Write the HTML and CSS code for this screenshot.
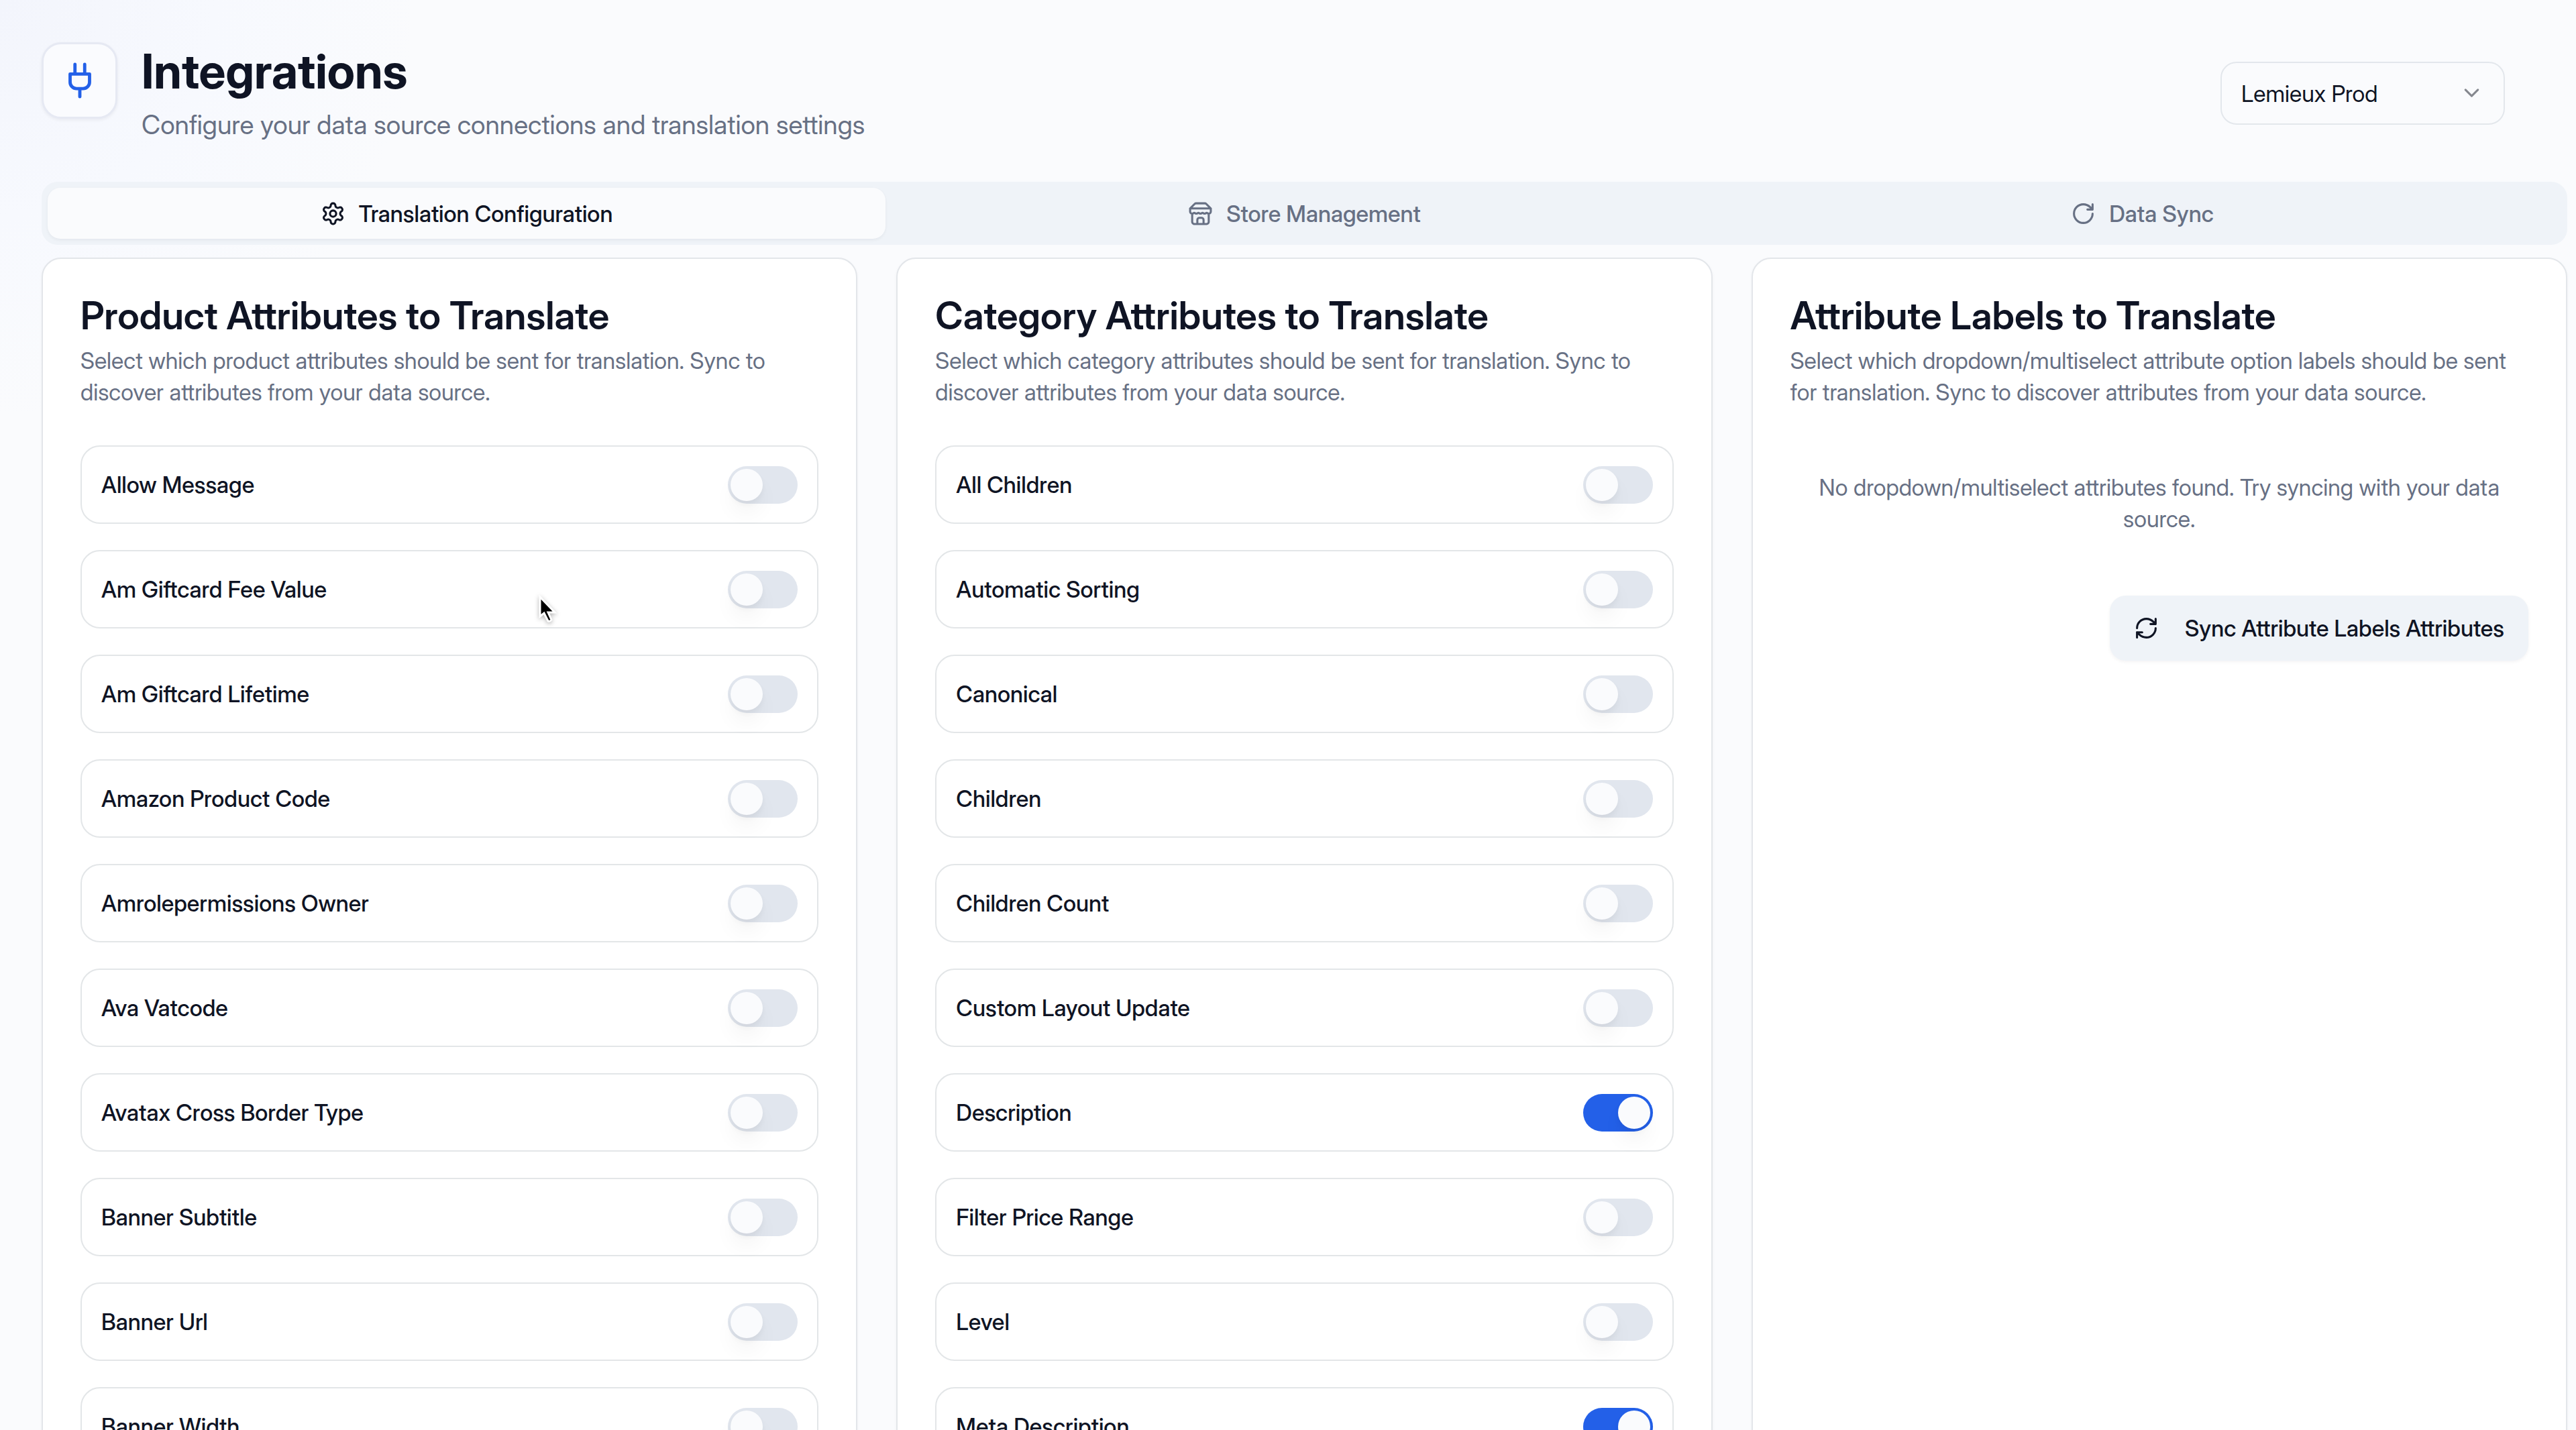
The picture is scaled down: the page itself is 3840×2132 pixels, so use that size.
FILE: index.html
```html
<!DOCTYPE html>
<html lang="en">
<head>
    <meta charset="UTF-8">
    <meta name="viewport" content="width=device-width, initial-scale=1.0">
    <title>Integrations</title>
    <link rel="stylesheet" href="styles.css">
</head>
<body>
    <div class="page">
        <header class="header">
            <div class="logo">
                <svg class="icon_lg" viewBox="0 0 24 24"><path d="M12 22v-5M9 8V2M15 8V2M18 8v5a4 4 0 0 1-4 4h-4a4 4 0 0 1-4-4V8Z"/></svg>
            </div>
            <div class="heading">
                <h1>Integrations</h1>
                <p>Configure your data source connections and translation settings</p>
            </div>
            <div class="store">
                <select class="store_select" aria-label="Store">
                    <option>Lemieux Prod</option>
                </select>
                <svg class="icon store_arrow" viewBox="0 0 24 24"><path d="m6 9 6 6 6-6"/></svg>
            </div>
        </header>

        <nav class="tab_lst">
            <button type="button" class="tab is_on">
                <svg class="icon" viewBox="0 0 24 24"><path d="M12.22 2h-.44a2 2 0 0 0-2 2v.18a2 2 0 0 1-1 1.73l-.43.25a2 2 0 0 1-2 0l-.15-.08a2 2 0 0 0-2.73.73l-.22.38a2 2 0 0 0 .73 2.73l.15.1a2 2 0 0 1 1 1.72v.51a2 2 0 0 1-1 1.74l-.15.09a2 2 0 0 0-.73 2.73l.22.38a2 2 0 0 0 2.73.73l.15-.08a2 2 0 0 1 2 0l.43.25a2 2 0 0 1 1 1.73V20a2 2 0 0 0 2 2h.44a2 2 0 0 0 2-2v-.18a2 2 0 0 1 1-1.73l.43-.25a2 2 0 0 1 2 0l.15.08a2 2 0 0 0 2.73-.73l.22-.39a2 2 0 0 0-.73-2.73l-.15-.08a2 2 0 0 1-1-1.74v-.5a2 2 0 0 1 1-1.74l.15-.09a2 2 0 0 0 .73-2.73l-.22-.38a2 2 0 0 0-2.73-.73l-.15.08a2 2 0 0 1-2 0l-.43-.25a2 2 0 0 1-1-1.73V4a2 2 0 0 0-2-2z"/><circle cx="12" cy="12" r="3"/></svg>
                Translation Configuration
            </button>
            <button type="button" class="tab">
                <svg class="icon" viewBox="0 0 24 24"><path d="m2 7 4.41-4.41A2 2 0 0 1 7.83 2h8.34a2 2 0 0 1 1.42.59L22 7M4 12v8a2 2 0 0 0 2 2h12a2 2 0 0 0 2-2v-8M15 22v-4a2 2 0 0 0-2-2h-2a2 2 0 0 0-2 2v4M2 7h20M22 7v3a2 2 0 0 1-2 2a2.7 2.7 0 0 1-1.59-.63.7.7 0 0 0-.82 0A2.7 2.7 0 0 1 16 12a2.7 2.7 0 0 1-1.59-.63.7.7 0 0 0-.82 0A2.7 2.7 0 0 1 12 12a2.7 2.7 0 0 1-1.59-.63.7.7 0 0 0-.82 0A2.7 2.7 0 0 1 8 12a2.7 2.7 0 0 1-1.59-.63.7.7 0 0 0-.82 0A2.7 2.7 0 0 1 4 12a2 2 0 0 1-2-2V7"/></svg>
                Store Management
            </button>
            <button type="button" class="tab">
                <svg class="icon" viewBox="0 0 24 24"><path d="M21 12a9 9 0 1 1-9-9c2.52 0 4.93 1 6.74 2.74L21 8M21 3v5h-5"/></svg>
                Data Sync
            </button>
        </nav>

        <main class="cards">
            <section class="card">
                <h2>Product Attributes to Translate</h2>
                <p class="desc">Select which product attributes should be sent for translation. Sync to discover attributes from your data source.</p>
                <div class="attr_lst">
                    <label class="attr">Allow Message<input type="checkbox" class="switch"></label>
                    <label class="attr">Am Giftcard Fee Value<input type="checkbox" class="switch"></label>
                    <label class="attr">Am Giftcard Lifetime<input type="checkbox" class="switch"></label>
                    <label class="attr">Amazon Product Code<input type="checkbox" class="switch"></label>
                    <label class="attr">Amrolepermissions Owner<input type="checkbox" class="switch"></label>
                    <label class="attr">Ava Vatcode<input type="checkbox" class="switch"></label>
                    <label class="attr">Avatax Cross Border Type<input type="checkbox" class="switch"></label>
                    <label class="attr">Banner Subtitle<input type="checkbox" class="switch"></label>
                    <label class="attr">Banner Url<input type="checkbox" class="switch"></label>
                    <label class="attr">Banner Width<input type="checkbox" class="switch"></label>
                </div>
            </section>

            <section class="card">
                <h2>Category Attributes to Translate</h2>
                <p class="desc">Select which category attributes should be sent for translation. Sync to discover attributes from your data source.</p>
                <div class="attr_lst">
                    <label class="attr">All Children<input type="checkbox" class="switch"></label>
                    <label class="attr">Automatic Sorting<input type="checkbox" class="switch"></label>
                    <label class="attr">Canonical<input type="checkbox" class="switch"></label>
                    <label class="attr">Children<input type="checkbox" class="switch"></label>
                    <label class="attr">Children Count<input type="checkbox" class="switch"></label>
                    <label class="attr">Custom Layout Update<input type="checkbox" class="switch"></label>
                    <label class="attr">Description<input type="checkbox" class="switch" checked></label>
                    <label class="attr">Filter Price Range<input type="checkbox" class="switch"></label>
                    <label class="attr">Level<input type="checkbox" class="switch"></label>
                    <label class="attr">Meta Description<input type="checkbox" class="switch" checked></label>
                </div>
            </section>

            <section class="card">
                <h2>Attribute Labels to Translate</h2>
                <p class="desc">Select which dropdown/multiselect attribute option labels should be sent for translation. Sync to discover attributes from your data source.</p>
                <p class="empty">No dropdown/multiselect attributes found. Try syncing with your data source.</p>
                <button type="button" class="sync_btn">
                    <svg class="icon" viewBox="0 0 24 24"><path d="M3 12a9 9 0 0 1 9-9 9.75 9.75 0 0 1 6.74 2.74L21 8M21 3v5h-5M21 12a9 9 0 0 1-9 9 9.75 9.75 0 0 1-6.74-2.74L3 16M8 16H3v5"/></svg>
                    Sync Attribute Labels Attributes
                </button>
            </section>
        </main>

        <svg class="cursor" viewBox="0 0 32 48"><path d="M5 4v29l6-5 6 12q3 1 5-2l-5-11h10z"/></svg>
    </div>
</body>
</html>
```
FILE: styles.css
```css
/* reset */
*{box-sizing: border-box;}
body,h1,h2,p{margin: 0; padding: 0;}
button,select{font: inherit; color: inherit; border: 0; cursor: pointer;}

body{
    font-family: "Inter Display", Inter, "Liberation Sans", sans-serif;
    font-variation-settings: "opsz" 32;
    font-size: 34px; line-height: 47px;
    color: #0f1424;
    background-color: #fafbfd;
}

/* layout */
.page{
    position: relative;
    height: 100vh; overflow: hidden;
    padding: 63px 13px 0 62px;
    background: radial-gradient(circle at 0 0, #f3f5fc 0, #f7f9fe 320px, #fafbfd 620px);
}

.icon,
.icon_lg{
    width: 37px; height: 37px; flex: none;
    fill: none; stroke: currentColor; stroke-width: 2;
    stroke-linecap: round; stroke-linejoin: round;
}
.icon_lg{width: 58px; height: 58px;}

/* header */
.header{display: flex; align-items: flex-start; padding-right: 93px;}
.logo{
    display: flex; align-items: center; justify-content: center;
    width: 113px; height: 114px; margin-right: 36px;
    border: 3px solid #e6e9f3; border-radius: 29px;
    background-color: #fafbfe;
    color: #2360e8;
    box-shadow: 0 2px 5px rgba(15, 20, 40, 0.06);
}
.heading{flex: 1;}
.heading h1{font-size: 71px; line-height: 86px; font-weight: 700;}
.heading p{font-size: 39px; line-height: 58px; margin-top: 8px; color: #677084;}

.store{position: relative; margin-top: 29px;}
.store_select{
    appearance: none;
    width: 424px; height: 94px; padding: 0 29px;
    border: 2px solid #e3e7ec; border-radius: 24px;
    background-color: #fafbfd;
}
.store_arrow{
    position: absolute; right: 31px; top: 28px;
    color: #85888f; pointer-events: none;
}

/* tabs */
.tab_lst{
    display: grid; grid-template-columns: repeat(3, 1fr);
    margin-top: 56px; padding: 9px;
    border-radius: 24px;
    background-color: #eff3f8;
}
.tab{
    display: flex; align-items: center; justify-content: center; gap: 20px;
    height: 76px; border-radius: 19px;
    background: none;
    font-weight: 500; color: #677084;
}
.tab.is_on{
    background-color: #fafbfd; color: #0f1424;
    box-shadow: 0 2px 5px rgba(15, 20, 40, 0.05);
}

/* cards */
.cards{
    display: grid; grid-template-columns: repeat(3, 1fr); gap: 58px;
    margin-top: 19px;
}
.card{
    padding: 56px;
    border: 2px solid #e3e6ea; border-radius: 29px;
    background-color: #fff;
    box-shadow: 0 2px 5px rgba(15, 20, 40, 0.04);
}
.card h2{font-size: 57px; line-height: 58px; font-weight: 600;}
.card .desc{margin-top: 14px; color: #677084;}

.attr_lst{display: grid; gap: 39px; margin-top: 56px;}
.attr{
    display: flex; align-items: center; justify-content: space-between;
    height: 117px; padding: 0 29px;
    border: 2px solid #e3e6e8; border-radius: 29px;
    font-weight: 500;
}

/* switch */
.switch{
    appearance: none;
    display: flex; align-items: center;
    width: 104px; height: 56px; margin: 0; padding: 0 4px;
    border-radius: 28px;
    background-color: #e1e6ee;
}
.switch::before{
    content: "";
    width: 48px; height: 48px; border-radius: 50%;
    background-color: #fafbfd;
    box-shadow: 0 20px 30px rgba(0, 0, 0, 0.04), 0 5px 8px rgba(0, 0, 0, 0.04);
}
.switch:checked{justify-content: flex-end; background-color: #2360e8;}

.empty{padding: 95px 29px 39px; text-align: center; color: #677084;}
.sync_btn{
    display: flex; align-items: center;
    gap: 39px; height: 97px; margin: 52px 0 0 auto; padding: 0 36px;
    border-radius: 24px;
    background-color: #eff3f8;
    font-weight: 500;
    box-shadow: 0 2px 5px rgba(15, 20, 40, 0.05);
}

/* mouse pointer */
.cursor{
    position: absolute; left: 800px; top: 886px;
    width: 32px; height: 48px;
    fill: #000; stroke: #fff; stroke-width: 3;
    filter: drop-shadow(0 2px 3px rgba(0, 0, 0, 0.3));
}
```
